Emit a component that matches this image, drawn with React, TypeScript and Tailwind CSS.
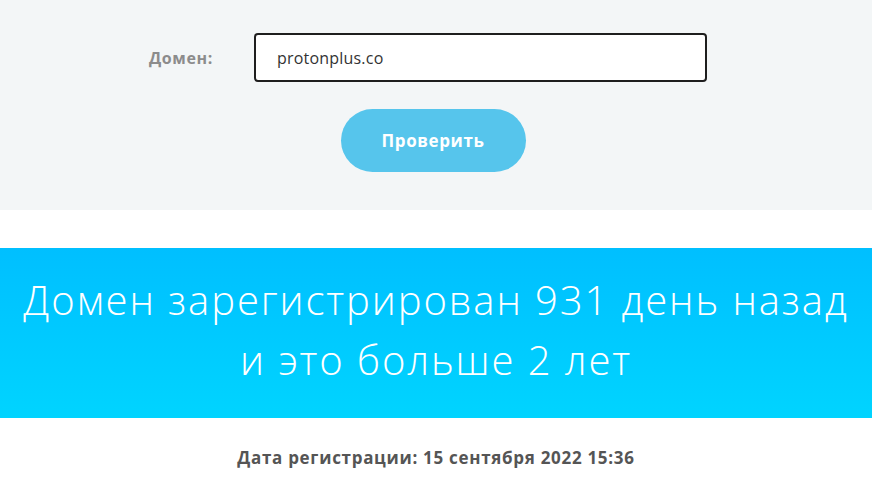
export default function App() {
  return (
    <div className="min-h-[480px] bg-white" style={{ fontFamily: '"Open Sans", "Noto Sans", sans-serif' }}>
      <section className="h-[210px] bg-[#f3f6f7] pt-[33px]">
        <div className="flex items-center justify-center pr-[16px]">
          <label className="w-[105px] text-[16px] font-bold tracking-[0.6px] text-[#8c8c8c]">Домен:</label>
          <input
            type="text"
            defaultValue="protonplus.co"
            className="h-[49px] w-[453px] rounded-[4px] border-2 border-[#1e1e1e] bg-white px-[21px] text-[16px] tracking-[0.2px] text-[#333] outline-none"
          />
        </div>
        <div className="mt-[27px] flex justify-center pr-[6px]">
          <button className="h-[63px] w-[185px] rounded-full bg-[#56c5ec] text-[17px] font-bold tracking-[0.6px] text-white">
            Проверить
          </button>
        </div>
      </section>
      <div className="h-[38px]" />
      <section className="flex h-[170px] flex-col items-center justify-center bg-gradient-to-b from-[#00bfff] to-[#00d4ff] pb-[6px] text-center">
        <h1 className="text-[40px] font-light leading-[60px] tracking-[1.9px] text-white">
          Домен зарегистрирован 931 день назад
          <br />и это больше 2 лет
        </h1>
      </section>
      <p className="mt-[27px] text-center text-[17px] font-bold tracking-[0.7px] text-[#555]">
        Дата регистрации: 15 сентября 2022 15:36
      </p>
    </div>
  );
}
